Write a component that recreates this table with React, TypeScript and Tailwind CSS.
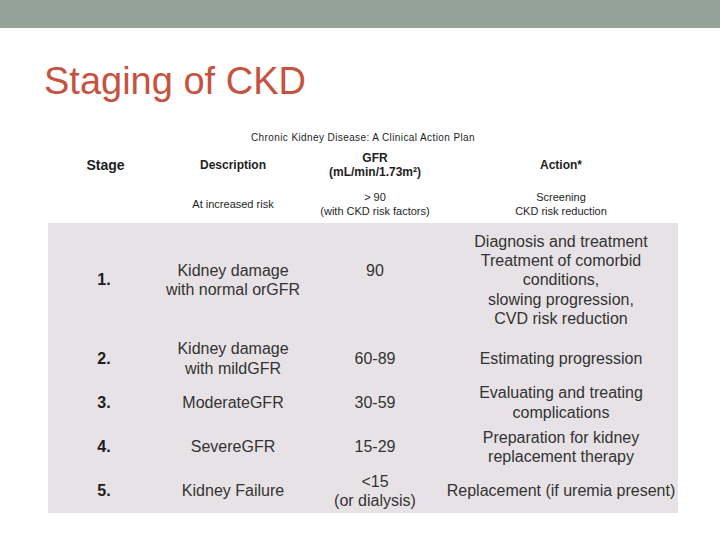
import React from 'react';

interface StageRow {
  stage: string;
  description: string[];
  gfr: string[];
  action: string[];
  height: string;
}

const rows: StageRow[] = [
  {
    stage: '1.',
    description: ['Kidney damage', 'with normal orGFR'],
    gfr: ['90', '\u00a0'],
    action: [
      'Diagnosis and treatment',
      'Treatment of comorbid',
      'conditions,',
      'slowing progression,',
      'CVD risk reduction',
    ],
    height: 'h-[114px]',
  },
  {
    stage: '2.',
    description: ['Kidney damage', 'with mildGFR'],
    gfr: ['60-89'],
    action: ['Estimating progression'],
    height: 'h-[43px]',
  },
  {
    stage: '3.',
    description: ['ModerateGFR'],
    gfr: ['30-59'],
    action: ['Evaluating and treating', 'complications'],
    height: 'h-[45px]',
  },
  {
    stage: '4.',
    description: ['SevereGFR'],
    gfr: ['15-29'],
    action: ['Preparation for kidney', 'replacement therapy'],
    height: 'h-[44px]',
  },
  {
    stage: '5.',
    description: ['Kidney Failure'],
    gfr: ['<15', '(or dialysis)'],
    action: ['Replacement (if uremia present)'],
    height: 'h-[44px]',
  },
];

const cols = 'grid grid-cols-[112px_146px_138px_234px]';

function Lines({ lines }: { lines: string[] }) {
  return (
    <div className="flex flex-col items-center text-center">
      {lines.map((l, i) => (
        <span key={i} className="whitespace-nowrap">{l}</span>
      ))}
    </div>
  );
}

export default function App() {
  return (
    <div className="w-[720px] h-[540px] bg-white overflow-hidden font-['Liberation_Sans',Arial,sans-serif]">
      {/* Top bar */}
      <div className="h-[28px] bg-[#94a39a]" />

      {/* Title */}
      <h1 className="mt-[34px] pl-[44px] text-[38px] leading-[38px] text-[#c5533f]">Staging of CKD</h1>

      {/* Table */}
      <div className="ml-[48px] w-[630px] mt-[29px] text-[#1e1e1e]">
        <div className="h-[16px] flex items-center justify-center text-[10px] tracking-[0.4px]">
          Chronic Kidney Disease: A Clinical Action Plan
        </div>

        {/* Header */}
        <div className={`${cols} h-[40px] items-center font-bold text-[12px] leading-[14px]`}>
          <div className="flex justify-center text-[14px] pl-[3px]">Stage</div>
          <Lines lines={['Description']} />
          <Lines lines={['GFR', '(mL/min/1.73m²)']} />
          <Lines lines={['Action*']} />
        </div>

        <div className={`${cols} h-[38px] items-center text-[11px] leading-[14px]`}>
          <div />
          <Lines lines={['At increased risk']} />
          <Lines lines={['> 90', '(with CKD risk factors)']} />
          <Lines lines={['Screening', 'CKD risk reduction']} />
        </div>

        {/* Staged rows */}
        <div className="bg-[#e6e2e5] text-[16px] leading-[19.25px] text-[#333333]">
          {rows.map((r) => (
            <div key={r.stage} className={`${cols} ${r.height} items-center`}>
              <div className="flex justify-center font-bold text-[#1e1e1e]">{r.stage}</div>
              <Lines lines={r.description} />
              <Lines lines={r.gfr} />
              <Lines lines={r.action} />
            </div>
          ))}
        </div>
      </div>
    </div>
  );
}
